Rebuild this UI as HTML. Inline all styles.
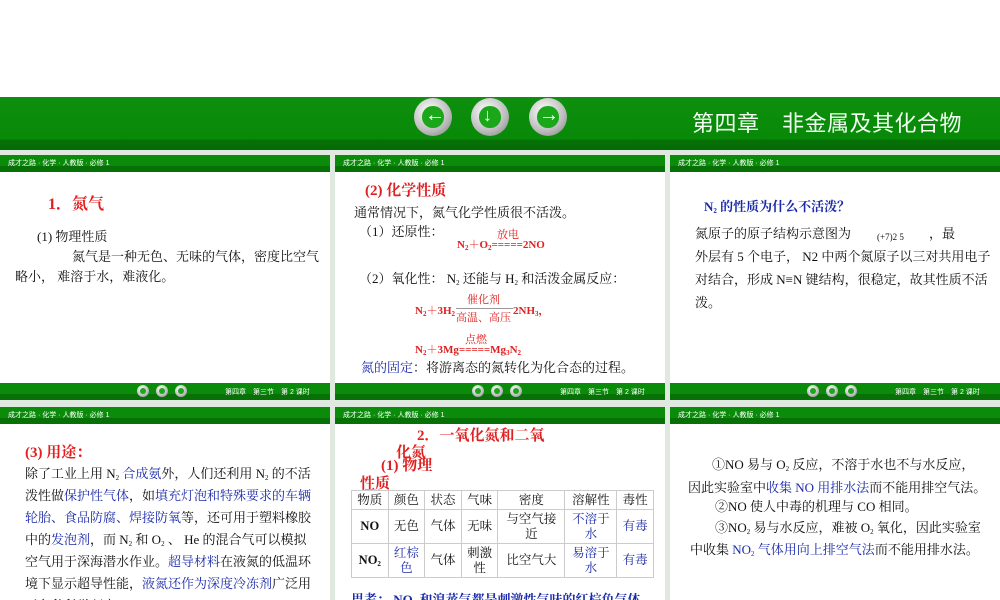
<!DOCTYPE html>
<html><head><meta charset="utf-8"><style>
*{margin:0;padding:0;box-sizing:border-box}
body{width:1000px;height:600px;overflow:hidden;background:#fff;position:relative;font-family:"Liberation Serif","Noto Serif CJK SC","Noto Sans CJK SC",serif;color:#111}
.a{position:absolute;white-space:nowrap}
.banner{position:absolute;left:0;top:97px;width:1000px;height:53px;background:linear-gradient(#0e8f0e,#078a07 80%,#067206 80%,#056a05)}
.gap{position:absolute;background:#dfe9df}
.panel{position:absolute;width:330px;background:#fff;overflow:hidden}
.hd{position:absolute;left:0;top:0;width:100%;height:17px;background:linear-gradient(#0a8c0a 65%,#077007 65%);color:#fff;font-size:7px;padding:3px 0 0 8px;font-family:"Liberation Sans","Noto Sans CJK SC",sans-serif}
.ft{position:absolute;left:0;bottom:0;width:100%;height:17px;background:linear-gradient(#0a8c0a 65%,#077007 65%);color:#fff;font-size:7px;font-family:"Liberation Sans","Noto Sans CJK SC",sans-serif}
.btn{position:absolute;border-radius:50%;background:radial-gradient(circle at 40% 35%,#fff,#bbb 60%,#777);}
.btn i{position:absolute;left:22%;top:22%;width:56%;height:56%;border-radius:50%;background:#1aa81a}
.r{color:#e02020}.b{color:#1a2aa8}
.t{font-size:13px;line-height:22px}
sub{font-size:7px;vertical-align:-2px;line-height:0}
table{border-collapse:collapse;font-size:12.5px;position:absolute}
td{border:1px solid #ccc;text-align:center;line-height:15px;padding:0 2px}
</style></head><body>
<div class="banner"></div>
<div class="btn" style="left:414px;top:98px;width:38px;height:38px"><i></i><span class="a" style="left:11px;top:6px;color:#fff;font-size:20px;font-weight:bold">←</span></div>
<div class="btn" style="left:471px;top:98px;width:38px;height:38px"><i></i><span class="a" style="left:12px;top:7px;color:#fff;font-size:18px;font-weight:bold">↓</span></div>
<div class="btn" style="left:529px;top:98px;width:38px;height:38px"><i></i><span class="a" style="left:10px;top:6px;color:#fff;font-size:20px;font-weight:bold">→</span></div>
<div class="a" style="left:692px;top:106px;color:#f2fff2;font-size:22px;font-family:'Liberation Sans','Noto Sans CJK SC',sans-serif;letter-spacing:0.5px">第四章　非金属及其化合物</div>
<div class="gap" style="left:0;top:150px;width:1000px;height:5px"></div>
<div class="gap" style="left:0;top:400px;width:1000px;height:7px"></div>
<div class="gap" style="left:330px;top:150px;width:5px;height:450px"></div>
<div class="gap" style="left:665px;top:150px;width:5px;height:450px"></div>

<!-- row1 -->
<div class="panel" style="left:0;top:155px;height:245px"><div class="hd">成才之路 · 化学 · 人教版 · 必修 1</div>
<div class="ft"><div class="btn" style="left:137px;top:2px;width:12px;height:12px"><i></i></div><div class="btn" style="left:156px;top:2px;width:12px;height:12px"><i></i></div><div class="btn" style="left:175px;top:2px;width:12px;height:12px"><i></i></div><span class="a" style="left:225px;top:4px">第四章　第三节　第 2 课时</span></div>
<div class="a r" style="left:48px;top:36px;font-size:16px;font-weight:bold">1．氮气</div>
<div class="a t" style="left:37px;top:71px">(1) 物理性质</div>
<div class="a t" style="left:72px;top:91px">氮气是一种无色、无味的气体，密度比空气</div>
<div class="a t" style="left:15px;top:111px">略小，  难溶于水，难液化。</div>
</div>
<div class="panel" style="left:335px;top:155px;height:245px"><div class="hd">成才之路 · 化学 · 人教版 · 必修 1</div>
<div class="ft"><div class="btn" style="left:137px;top:2px;width:12px;height:12px"><i></i></div><div class="btn" style="left:156px;top:2px;width:12px;height:12px"><i></i></div><div class="btn" style="left:175px;top:2px;width:12px;height:12px"><i></i></div><span class="a" style="left:225px;top:4px">第四章　第三节　第 2 课时</span></div>
<div class="a r" style="left:30px;top:24px;font-size:15px;font-weight:bold">(2) 化学性质</div>
<div class="a t" style="left:19px;top:47px">通常情况下，氮气化学性质很不活泼。</div>
<div class="a t" style="left:24px;top:66px">（1）还原性：</div>
<div class="a r" style="left:162px;top:71px;font-size:11px">放电</div>
<div class="a r" style="left:122px;top:81px;font-size:11px;font-weight:bold">N<sub>2</sub>＋O<sub>2</sub>=====2NO</div>
<div class="a t" style="left:24px;top:113px">（2）氧化性： N<sub>2</sub> 还能与 H<sub>2</sub> 和活泼金属反应：</div>
<div class="a r" style="left:132px;top:136px;font-size:11px">催化剂</div>
<div class="a r" style="left:80px;top:147px;font-size:11px;font-weight:bold">N<sub>2</sub>＋3H<sub>2</sub></div>
<div class="a r" style="left:178px;top:147px;font-size:11px;font-weight:bold">2NH<sub>3</sub>，</div>
<div class="a" style="left:121px;top:153px;width:57px;border-top:1px solid #999"></div>
<div class="a r" style="left:121px;top:154px;font-size:11px">高温、高压</div>
<div class="a r" style="left:130px;top:176px;font-size:11px">点燃</div>
<div class="a r" style="left:80px;top:186px;font-size:11px;font-weight:bold">N<sub>2</sub>＋3Mg=====Mg<sub>3</sub>N<sub>2</sub></div>
<div class="a t" style="left:26px;top:202px"><span class="b">氮的固定</span>：将游离态的氮转化为化合态的过程。</div>
</div>
<div class="panel" style="left:670px;top:155px;height:245px"><div class="hd">成才之路 · 化学 · 人教版 · 必修 1</div>
<div class="ft"><div class="btn" style="left:137px;top:2px;width:12px;height:12px"><i></i></div><div class="btn" style="left:156px;top:2px;width:12px;height:12px"><i></i></div><div class="btn" style="left:175px;top:2px;width:12px;height:12px"><i></i></div><span class="a" style="left:225px;top:4px">第四章　第三节　第 2 课时</span></div>
<div class="a b" style="left:34px;top:41px;font-size:13px;font-weight:bold">N<sub>2</sub> 的性质为什么不活泼？</div>
<div class="a t" style="left:25px;top:67px;line-height:23px">氮原子的原子结构示意图为　　　　　　，最<br>外层有 5 个电子， N2 中两个氮原子以三对共用电子<br>对结合，形成 N≡N 键结构，很稳定，故其性质不活<br>泼。</div>
<div class="a" style="left:207px;top:77px;font-size:9px">(+7)2 5</div>
</div>

<!-- row2 -->
<div class="panel" style="left:0;top:407px;height:193px"><div class="hd">成才之路 · 化学 · 人教版 · 必修 1</div>
<div class="a r" style="left:25px;top:34px;font-size:15px;font-weight:bold">(3) 用途：</div>
<div class="a t" style="left:25px;top:56px;line-height:22px">除了工业上用 N<sub>2</sub> <span class="b">合成氨</span>外，人们还利用 N<sub>2</sub> 的不活<br>泼性做<span class="b">保护性气体</span>，如<span class="b">填充灯泡和特殊要求的车辆</span><br><span class="b">轮胎、食品防腐、焊接防氧</span>等，还可用于塑料橡胶<br>中的<span class="b">发泡剂</span>，而 N<sub>2</sub> 和 O<sub>2</sub> 、 He 的混合气可以模拟<br>空气用于深海潜水作业。<span class="b">超导材料</span>在液氮的低温环<br>境下显示超导性能，<span class="b">液氮还作为深度冷冻剂</span>广泛用<br>于各种科学研究。</div>
</div>
<div class="panel" style="left:335px;top:407px;height:193px"><div class="hd">成才之路 · 化学 · 人教版 · 必修 1</div>
<div class="a r" style="left:82px;top:17px;font-size:15px;font-weight:bold">2．一氧化氮和二氧</div>
<div class="a r" style="left:61px;top:34px;font-size:15px;font-weight:bold">化氮</div>
<div class="a r" style="left:46px;top:47px;font-size:15px;font-weight:bold">(1) 物理</div>
<div class="a r" style="left:25px;top:65px;font-size:15px;font-weight:bold">性质</div>
<table style="left:16px;top:83px;width:303px">
<tr style="height:19px"><td>物质</td><td>颜色</td><td>状态</td><td>气味</td><td>密度</td><td>溶解性</td><td>毒性</td></tr>
<tr style="height:34px"><td><b>NO</b></td><td>无色</td><td>气体</td><td>无味</td><td>与空气接<br>近</td><td class="b">不溶于<br>水</td><td class="b">有毒</td></tr>
<tr style="height:34px"><td><b>NO<sub>2</sub></b></td><td class="b">红棕<br>色</td><td>气体</td><td>刺激<br>性</td><td>比空气大</td><td class="b">易溶于<br>水</td><td class="b">有毒</td></tr>
</table>
<div class="a b" style="left:16px;top:182px;font-size:13px;font-weight:bold">思考：  NO<sub>2</sub> 和溴蒸气都是刺激性气味的红棕色气体，</div>
</div>
<div class="panel" style="left:670px;top:407px;height:193px"><div class="hd">成才之路 · 化学 · 人教版 · 必修 1</div>
<div class="a t" style="left:42px;top:47px">①NO 易与 O<sub>2</sub> 反应，不溶于水也不与水反应，</div>
<div class="a t" style="left:18px;top:70px">因此实验室中<span class="b">收集 NO 用排水法</span>而不能用排空气法。</div>
<div class="a t" style="left:45px;top:89px">②NO 使人中毒的机理与 CO 相同。</div>
<div class="a t" style="left:45px;top:110px">③NO<sub>2</sub> 易与水反应，难被 O<sub>2</sub> 氧化，因此实验室</div>
<div class="a t" style="left:20px;top:132px">中收集 <span class="b">NO<sub>2</sub> 气体用向上排空气法</span>而不能用排水法。</div>
</div>
</body></html>
